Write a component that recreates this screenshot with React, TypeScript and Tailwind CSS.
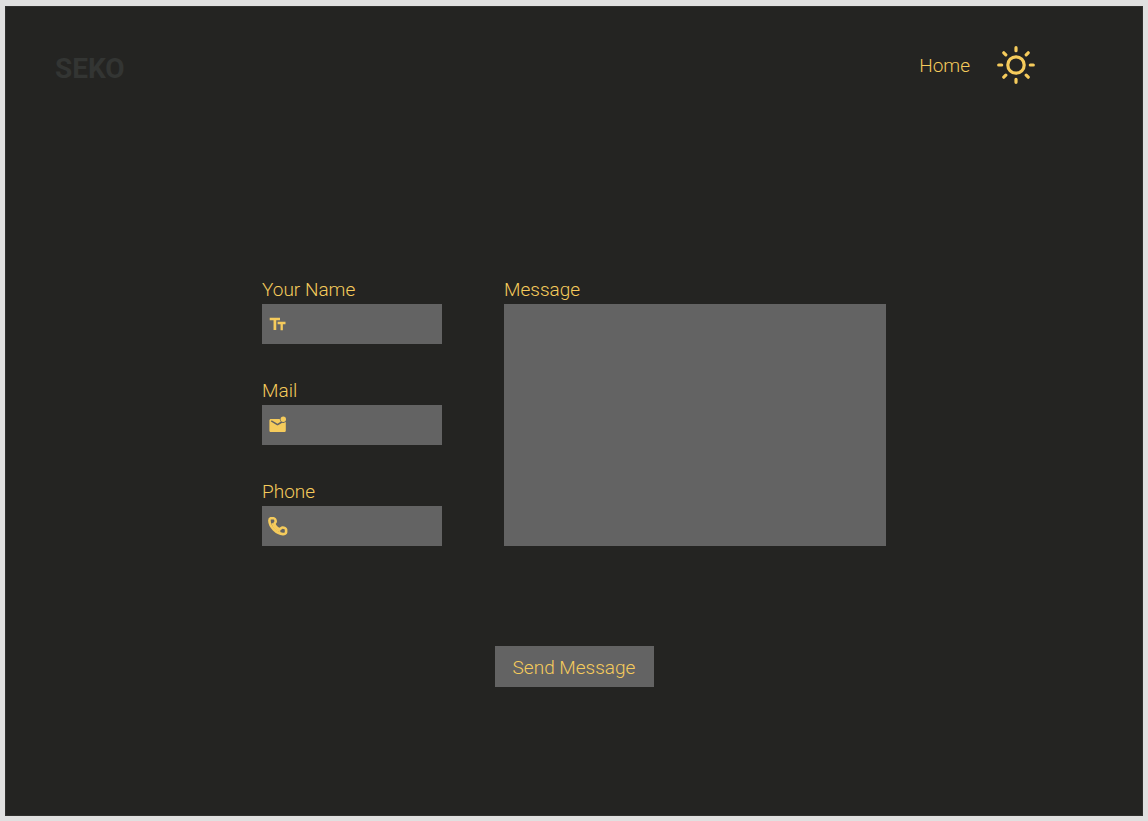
import type { ReactNode } from 'react';

function SunIcon() {
  return (
    <svg viewBox="-20 -20 40 40" className="size-10" fill="none" stroke="currentColor" strokeWidth="3.2" strokeLinecap="round" aria-hidden="true">
      <circle r="8.2" />
      <path d="M0-17.3v3M0 14.3v3M-17.3 0h3M14.3 0h3M-12.2-12.2l2 2M10.2 10.2l2 2M-12.2 12.2l2-2M10.2-10.2l2-2" />
    </svg>
  );
}

function TextIcon() {
  return (
    <svg viewBox="0 0 20 20" className="size-5" fill="none" stroke="currentColor" aria-hidden="true">
      <path d="M1.700 5h10.300M6.900 5v11" strokeWidth="2.700" strokeLinejoin="round" />
      <path d="M9.600 9h7.900M13.700 9v7.200" strokeWidth="2.300" />
    </svg>
  );
}

function MailIcon() {
  return (
    <svg viewBox="0 0 20 20" className="size-5" fill="currentColor" aria-hidden="true">
      <path d="M3 4h8.700c.1 1 .5 1.900 1.200 2.600L9.500 8.700 4 5.500c-.8-.5-1.600.7-.7 1.300l5.700 3.500c.3.200.7.200 1 0l4.300-2.600c1.200.4 2.500.1 3.500-.6V15.500c0 .9-.7 1.600-1.600 1.600H3c-.9 0-1.600-.7-1.600-1.600V5.600C1.400 4.700 2.100 4 3 4Z" />
      <circle cx="15.300" cy="4.300" r="2.700" />
    </svg>
  );
}

function PhoneIcon() {
  return (
    <svg viewBox="0 0 20 20" className="size-5" fill="none" stroke="currentColor" strokeWidth="2.600" strokeLinejoin="round" aria-hidden="true">
      <path d="M2.600 2.200h3c1 0 2.100 1.500 2.100 3.200 0 1.300-1.500 1.500-1.200 2.900.4 1.700 3 4.200 4.800 4.600 1.400.3 1.900-1.300 3.200-1.400 1.700-.1 3.600.9 3.600 2v2.700c0 1.300-1.500 2-3.200 1.900C8.500 17.800 1.500 10.700 1.400 4.500 1.400 3.200 1.800 2.400 2.600 2.200Z" />
      <path d="M4.300 7.200c1.200 3.600 4.400 7 8.100 8.200" strokeWidth="2" />
    </svg>
  );
}

type FieldProps = { id: string; label: string; type: string; icon: ReactNode };

function Field({ id, label, type, icon }: FieldProps) {
  return (
    <div className="flex flex-col">
      <label htmlFor={id} className="h-7 leading-7">{label}</label>
      <div className="flex h-10 items-center bg-[#636363] pl-1.5">
        {icon}
        <input id={id} name={id} type={type} className="h-full min-w-0 flex-1 bg-transparent px-2 outline-none" />
      </div>
    </div>
  );
}

export default function App() {
  return (
    <div className="min-h-screen bg-[#e0e0e0] px-[5px] pt-1.5 pb-[5px] font-['Roboto',sans-serif] text-[19px] font-light text-[#f5cb5c]">
      <div className="flex min-h-[calc(100vh-11px)] flex-col border border-[#30302e] bg-[#242422]">
        <header className="flex items-center justify-between pt-[38px] pr-[106px] pl-[49px]">
          <a href="#" className="pt-2 text-[28px] leading-8 font-bold text-[#333533]">SEKO</a>
          <nav className="flex items-center gap-[26px]">
            <a href="#" className="pt-0.5 leading-6">Home</a>
            <button type="button" aria-label="Toggle theme"><SunIcon /></button>
          </nav>
        </header>
        <form className="mx-auto mt-[191px] flex w-full max-w-[624px] flex-col items-center gap-[100px]">
          <div className="flex w-full gap-[62px]">
            <div className="flex w-[180px] shrink-0 flex-col gap-[33px]">
              <Field id="name" label="Your Name" type="text" icon={<TextIcon />} />
              <Field id="mail" label="Mail" type="email" icon={<MailIcon />} />
              <Field id="phone" label="Phone" type="tel" icon={<PhoneIcon />} />
            </div>
            <div className="flex min-w-0 flex-1 flex-col">
              <label htmlFor="message" className="h-7 leading-7">Message</label>
              <textarea id="message" name="message" className="block w-full flex-1 resize-none bg-[#636363] p-2 outline-none" />
            </div>
          </div>
          <button type="submit" className="h-[41px] w-[159px] bg-[#636363] pt-1">Send Message</button>
        </form>
      </div>
    </div>
  );
}
